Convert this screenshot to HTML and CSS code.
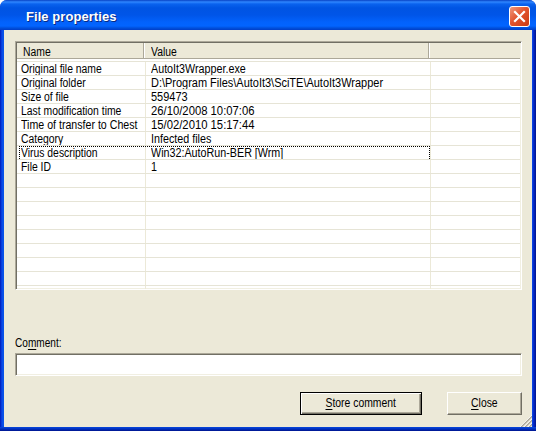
FILE: index.html
```html
<!DOCTYPE html>
<html lang="en">
<head>
<meta charset="utf-8">
<title>File properties</title>
<link rel="stylesheet" href="styles.css">
</head>
<body>
<main class="window">
  <header class="titlebar">
    <h1>File properties</h1>
    <button class="close-x" aria-label="Close">
      <svg width="17" height="17" viewBox="0 0 17 17"><path d="M4 4L13 13M13 4L4 13" stroke="#fff" stroke-width="2.2" stroke-linecap="square"/></svg>
    </button>
  </header>
  <section class="content">
    <div class="list">
      <div class="head"><div><span>Name</span></div><div><span>Value</span></div><div></div></div>
      <div class="rows">
        <div class="row"><div><span>Original file name</span></div><div><span>AutoIt3Wrapper.exe</span></div><div></div></div>
        <div class="row"><div><span>Original folder</span></div><div><span class="path">D:\Program Files\AutoIt3\SciTE\AutoIt3Wrapper</span></div><div></div></div>
        <div class="row"><div><span>Size of file</span></div><div><span class="path">559473</span></div><div></div></div>
        <div class="row"><div><span>Last modification time</span></div><div><span class="date">26/10/2008 10:07:06</span></div><div></div></div>
        <div class="row"><div><span class="wide">Time of transfer to Chest</span></div><div><span class="date">15/02/2010 15:17:44</span></div><div></div></div>
        <div class="row"><div><span>Category</span></div><div><span>Infected files</span></div><div></div></div>
        <div class="row focused"><div><span>Virus description</span></div><div><span>Win32:AutoRun-BER [Wrm]</span></div><div></div></div>
        <div class="row"><div><span>File ID</span></div><div><span>1</span></div><div></div></div>
        <div class="row"><div></div><div></div><div></div></div>
        <div class="row"><div></div><div></div><div></div></div>
        <div class="row"><div></div><div></div><div></div></div>
        <div class="row"><div></div><div></div><div></div></div>
        <div class="row"><div></div><div></div><div></div></div>
        <div class="row"><div></div><div></div><div></div></div>
        <div class="row"><div></div><div></div><div></div></div>
        <div class="row"><div></div><div></div><div></div></div>
        <div class="row"><div></div><div></div><div></div></div>
      </div>
    </div>
    <label class="label" for="comment"><span>Co<u>m</u>ment:</span></label>
    <input class="field" id="comment" type="text">
    <div class="actions">
      <button class="btn default"><span><u>S</u>tore comment</span></button>
      <button class="btn"><span><u>C</u>lose</span></button>
    </div>
  </section>
  <svg class="grip" width="12" height="12" viewBox="0 0 12 12" fill="none">
    <path d="M1 12L12 1M5 12L12 5M9 12L12 9" stroke="#aca899" stroke-width="1.6"/>
    <path d="M0 12L12 0M4 12L12 4M8 12L12 8" stroke="#fff" stroke-width=".8"/>
  </svg>
</main>
</body>
</html>
```
FILE: styles.css
```css
* { box-sizing: border-box; }
body {
  margin: 0;
  background: #fff;
  font: 12px/14px "Liberation Sans", Arial, sans-serif;
  color: #000;
}
.window {
  position: relative;
  width: 536px;
  height: 431px;
  display: flex;
  flex-direction: column;
  overflow: hidden;
  border-radius: 7px 7px 0 0;
  background: linear-gradient(90deg, #0019b8, #0a4ae8 2px, #0855e8 4px, #0855e8 532px, #0831d9 533px, #00138c 536px);
}
.window::after {
  content: "";
  height: 4px;
  flex: none;
  background: linear-gradient(#0848dc, #0030c0 2px, #00138c);
}
.titlebar {
  height: 30px;
  flex: none;
  display: flex;
  align-items: center;
  justify-content: space-between;
  padding: 3px 6px 0 26px;
  background: linear-gradient(#0842c4 0, #2f86ff 2px, #0a62ee 4px, #0054e3 8px, #0055e8 15px, #0262fc 22px, #0264ff 26px, #0050dc 28px, #003dc8 30px);
}
.titlebar h1 {
  margin: 1px 0 0;
  font: bold 13px/16px "Liberation Sans", Arial, sans-serif;
  letter-spacing: .06px;
  color: #fff;
  text-shadow: 1px 1px 0 #0a2a80;
}
.close-x {
  width: 21px;
  height: 21px;
  padding: 1px;
  border: 1px solid #fff;
  border-radius: 3px;
  background: linear-gradient(135deg, #f0987c, #e2552f 45%, #cc3a10);
}
.close-x svg { display: block; }
.content {
  flex: none;
  height: 397px;
  margin: 0 4px;
  padding: 11px 10px 0 11px;
  display: flex;
  flex-direction: column;
  background: #ece9d8;
}
.list, .field {
  width: 507px;
  border: 1px solid;
  border-color: #aca899 #fff #fff #aca899;
  box-shadow: inset 1px 1px 0 #716f64, inset -1px -1px 0 #f1efe2;
  background: #fff;
}
.list { height: 249px; padding: 1px; overflow: hidden; }
.head, .row { display: grid; grid-template-columns: 129px 285px 1fr; }
.head {
  height: 16px;
  line-height: 17px;
  grid-template-columns: 127px 285px 1fr;
  background: #ece9d8;
  border-bottom: 1px solid #aca899;
}
.head > div { padding: 1px 0 0 6px; height: 15px; border-right: 1px solid #aca899; box-shadow: 1px 0 #fff; }
.head > div:last-child { border: 0; box-shadow: none; }
.head > div + div { padding-left: 7px; }
.rows {
  height: 230px;
  border-top: 1px solid #fff;
  overflow: hidden;
}
.rows::before { content: ""; display: block; height: 1px; width: 100%; }
.row {
  position: relative;
  height: 14px;
  line-height: 15px;
  border-top: 1px solid #e6e4d6;
}
.row > div { height: 13px; padding-left: 4px; white-space: nowrap; border-right: 1px solid #ece9d8; }
.row > div + div { padding-left: 5px; }
.row > div:last-child { border: 0; }
/* Condensed face for labels and cells */
.head span, .row span, .label span, .btn span {
  display: inline-block;
  transform: scaleX(.865);
  transform-origin: 0 50%;
}
.row .wide { transform: scaleX(.885); }
.row > div + div span { transform: scaleX(.895); }
.row > div + div .path { transform: scaleX(.914); }
.row > div + div .date { transform: scaleX(.94); }
.btn span { transform-origin: 50% 50%; }
.label span { transform: scaleX(.84); }
.focused::after {
  content: "";
  position: absolute;
  left: 2px;
  top: 0;
  width: 411px;
  height: 13px;
  background:
    repeating-linear-gradient(90deg, #000 0 1px, transparent 1px 2px) top / 100% 1px no-repeat,
    repeating-linear-gradient(#000 0 1px, transparent 1px 2px) left / 1px 100% no-repeat,
    repeating-linear-gradient(#000 0 1px, transparent 1px 2px) right / 1px 100% no-repeat;
}
.label { margin-top: 46px; }
u { text-decoration: underline; text-underline-offset: 2px; text-decoration-thickness: 1px; }
.field { height: 23px; margin-top: 3px; padding: 2px 4px; outline: 0; border-radius: 0; }
.actions { display: flex; justify-content: flex-end; gap: 25px; margin-top: 16px; }
.btn {
  width: 75px;
  height: 23px;
  padding: 0 0 1px;
  font: inherit;
  color: #000;
  background: #ece9d8;
  border: 1px solid;
  border-color: #fff #716f64 #716f64 #fff;
  box-shadow: inset -1px -1px 0 #aca899;
}
.btn.default {
  width: 122px;
  border-color: #000;
  box-shadow: inset 1px 1px 0 #fff, inset -1px -1px 0 #716f64, inset -2px -2px 0 #aca899;
}
.grip { position: absolute; right: 4px; bottom: 4px; }
```
